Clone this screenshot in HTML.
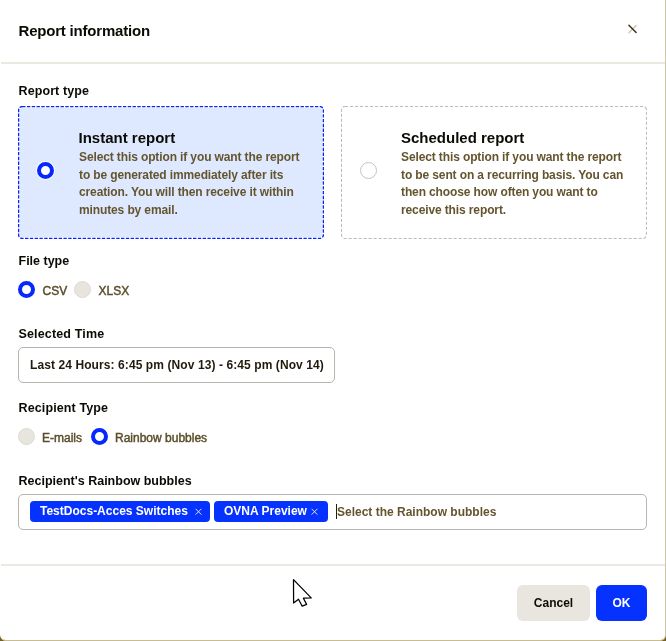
<!DOCTYPE html>
<html><head><meta charset="utf-8">
<style>
*{box-sizing:border-box;margin:0;padding:0}
html,body{width:666px;height:641px;overflow:hidden;background:#76601e}
body{font-family:"Liberation Sans",sans-serif;position:relative}
.dlg{will-change:transform;position:absolute;left:0;top:0;width:666px;height:641px;background:#fff;border-right:1px solid #d2c9a4;border-bottom:1px solid #c9bd8f;border-radius:0 0 6px 6px}
.abs{position:absolute;white-space:pre}
.title{left:18.5px;top:22px;font-size:15px;font-weight:bold;color:#0c0a04;letter-spacing:-0.2px;line-height:18px}
.sep{position:absolute;left:1px;width:664px;height:2px;background:#ebe8e2}
.lbl{font-size:12.5px;font-weight:bold;color:#0c0a04;line-height:15px}
.card{position:absolute;top:106px;width:306px;height:133px;border-radius:5px}
.card svg{position:absolute;left:0;top:0}
.ct{position:absolute;font-size:15px;font-weight:bold;color:#0c0a04;line-height:18px;white-space:pre}
.cd{position:absolute;font-size:12px;font-weight:bold;color:#64552f;line-height:17.6px;letter-spacing:-0.12px;white-space:pre}
.radio{position:absolute;width:17px;height:17px;border-radius:50%}
.ron{border:4.4px solid #0628ff;background:#fff;box-shadow:0 0 0 1px #fff}
.roff{background:#e8e5df;border:1px solid #dedad3}
.rlbl{position:absolute;font-size:12px;color:#5a4d2b;line-height:15px;white-space:pre;-webkit-text-stroke:0.45px #5a4d2b}
.inp{position:absolute;height:36px;border:1px solid #b6b5af;border-radius:5px;background:#fff}
.tag{position:absolute;top:501px;height:21px;background:#0632ff;border-radius:4px;color:#fff;font-size:12px;font-weight:bold;line-height:21px;white-space:pre}
.tag .x{position:absolute;top:0}
.btn{position:absolute;top:585px;height:36px;border-radius:6px;font-size:12px;font-weight:bold;line-height:36px;text-align:center}
</style></head><body>
<div class="dlg">
  <div class="abs title">Report information</div>
  <svg class="abs" style="left:627px;top:23px" width="12" height="12" viewBox="0 0 12 12">
    <line x1="9" y1="2.6" x2="2" y2="9.6" stroke="#cfcabe" stroke-width="1.5" stroke-linecap="round"/>
    <line x1="1.9" y1="2.3" x2="9.1" y2="9.5" stroke="#3b3113" stroke-width="1.45" stroke-linecap="round"/>
  </svg>
  <div class="sep" style="top:62px"></div>

  <div class="abs lbl" style="left:18.5px;top:84px;letter-spacing:0.1px">Report type</div>

  <div class="card" style="left:18px">
    <svg width="306" height="133"><rect x="2" y="2" width="302" height="129" rx="2.5" fill="#dee9ff"/><rect x="0.6" y="0.6" width="304.8" height="131.8" rx="3.5" fill="none" stroke="#0a22ff" stroke-width="1.4" stroke-dasharray="3.4 1.4"/></svg>
    <div class="radio ron" style="left:19px;top:56px"></div>
    <div class="ct" style="left:60.5px;top:23px">Instant report</div>
    <div class="cd" style="left:61px;top:43px">Select this option if you want the report
to be generated immediately after its
creation. You will then receive it within
minutes by email.</div>
  </div>

  <div class="card" style="left:341px;background:#fff">
    <svg width="306" height="133"><rect x="0.5" y="0.5" width="305" height="132" rx="3.5" fill="none" stroke="#bfbcb4" stroke-width="1.1" stroke-dasharray="3.2 1.8"/></svg>
    <div class="radio" style="left:19px;top:56px;border:1px solid #c6c3bc;background:#fff"></div>
    <div class="ct" style="left:60px;top:23px">Scheduled report</div>
    <div class="cd" style="left:60px;top:43px">Select this option if you want the report
to be sent on a recurring basis. You can
then choose how often you want to
receive this report.</div>
  </div>

  <div class="abs lbl" style="left:18.5px;top:254px">File type</div>
  <div class="radio ron" style="left:18px;top:281px"></div>
  <div class="rlbl" style="left:42.5px;top:284px">CSV</div>
  <div class="radio roff" style="left:74px;top:281px"></div>
  <div class="rlbl" style="left:98.5px;top:284px">XLSX</div>

  <div class="abs lbl" style="left:18.5px;top:327px;letter-spacing:0.15px">Selected Time</div>
  <div class="inp" style="left:18px;top:347px;width:317px"></div>
  <div class="abs" style="left:30px;top:358px;font-size:12px;letter-spacing:0.09px;font-weight:bold;color:#1f1a0c;line-height:15px">Last 24 Hours: 6:45 pm (Nov 13) - 6:45 pm (Nov 14)</div>

  <div class="abs lbl" style="left:18.5px;top:401px;letter-spacing:0.12px">Recipient Type</div>
  <div class="radio roff" style="left:18px;top:428px"></div>
  <div class="rlbl" style="left:42px;top:431px">E-mails</div>
  <div class="radio ron" style="left:91px;top:428px"></div>
  <div class="rlbl" style="left:115px;top:431px">Rainbow bubbles</div>

  <div class="abs lbl" style="left:18.5px;top:474px">Recipient's Rainbow bubbles</div>
  <div class="inp" style="left:18px;top:494px;width:629px"></div>
  <div class="tag" style="left:30px;width:180px"><span style="position:absolute;left:10px">TestDocs-Acces Switches</span><svg class="x" style="left:164px;top:6px" width="9" height="9" viewBox="0 0 9 9"><path d="M1.6,1.8 L7.4,7.6 M7.4,1.8 L1.6,7.6" stroke="#e8ebff" stroke-width="0.95"/></svg></div>
  <div class="tag" style="left:214px;width:114px"><span style="position:absolute;left:10px">OVNA Preview</span><svg class="x" style="left:96px;top:6px" width="9" height="9" viewBox="0 0 9 9"><path d="M1.6,1.8 L7.4,7.6 M7.4,1.8 L1.6,7.6" stroke="#e8ebff" stroke-width="0.95"/></svg></div>
  <div class="abs" style="left:336px;top:504px;width:1.3px;height:15px;background:#221c0b"></div>
  <div class="abs" style="left:337px;top:505px;font-size:12px;font-weight:bold;color:#64552f;line-height:15px">Select the Rainbow bubbles</div>

  <div class="sep" style="top:564px"></div>

  <div class="btn" style="left:517px;width:73px;background:#e9e6df;color:#0f0c05">Cancel</div>
  <div class="btn" style="left:596px;width:51px;background:#0632ff;color:#fff">OK</div>

  <svg class="abs" style="left:290px;top:576px" width="26" height="34" viewBox="0 0 26 34">
    <path d="M3.5,3.6 L3.6,27 L8.5,23.2 L12.2,30.2 L16.6,28.4 L13.4,22.2 L21.2,21.9 Z" fill="#fff" stroke="#000" stroke-width="1.25" stroke-linejoin="round"/>
  </svg>
</div>
</body></html>
